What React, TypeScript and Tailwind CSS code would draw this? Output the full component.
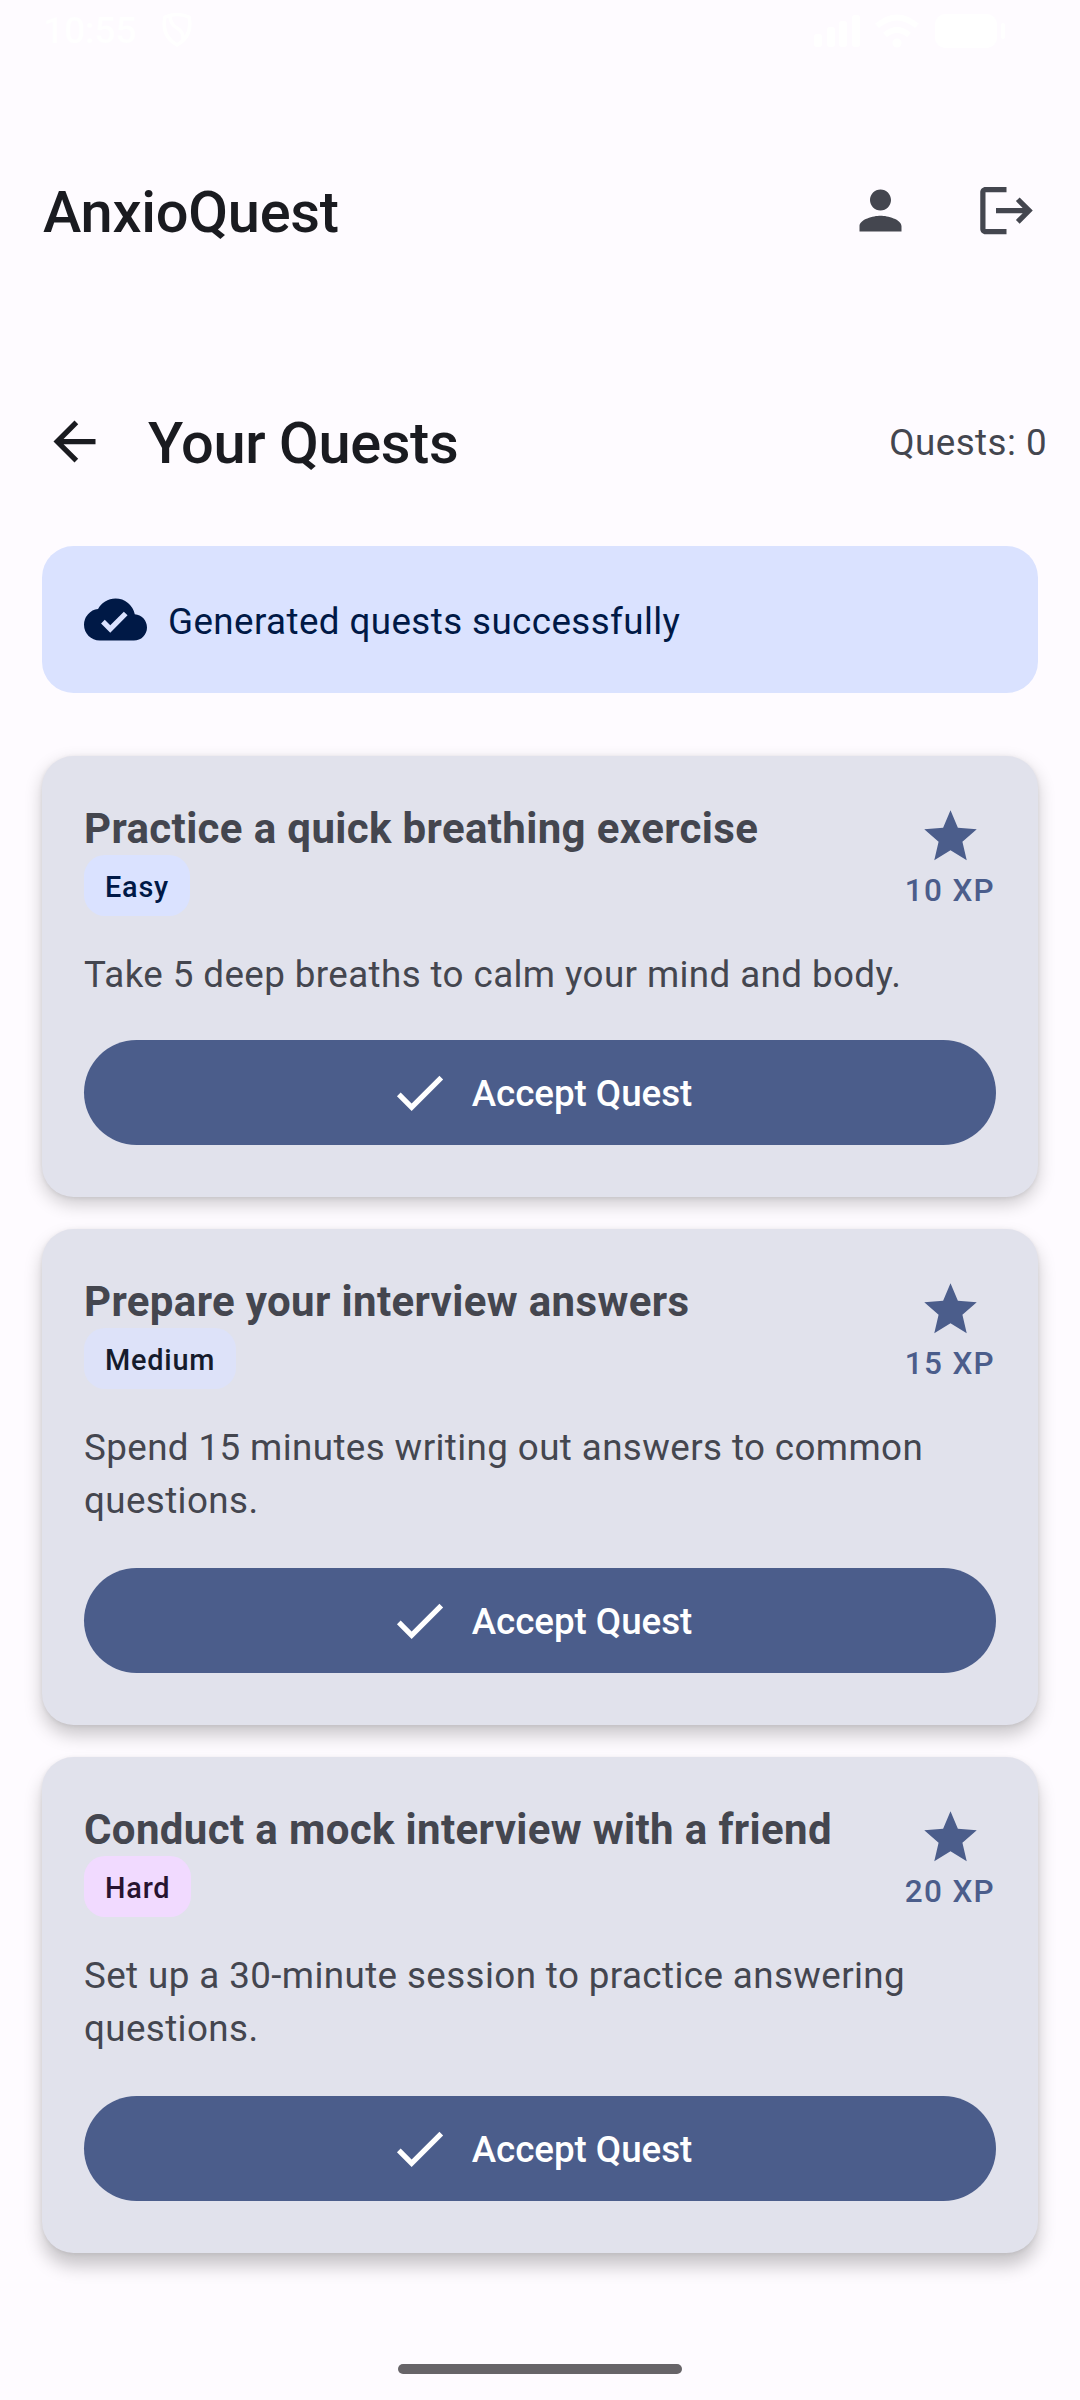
import { clsx } from "clsx";
import { MdArrowBack, MdCheck, MdCloudDone, MdLogout, MdPerson, MdStar } from "react-icons/md";

type Difficulty = "Easy" | "Medium" | "Hard";

interface Quest {
  title: string;
  difficulty: Difficulty;
  xp: number;
  description: string;
}

const quests: Quest[] = [
  {
    title: "Practice a quick breathing exercise",
    difficulty: "Easy",
    xp: 10,
    description: "Take 5 deep breaths to calm your mind and body.",
  },
  {
    title: "Prepare your interview answers",
    difficulty: "Medium",
    xp: 15,
    description: "Spend 15 minutes writing out answers to common questions.",
  },
  {
    title: "Conduct a mock interview with a friend",
    difficulty: "Hard",
    xp: 20,
    description: "Set up a 30-minute session to practice answering questions.",
  },
];

const badgeColors: Record<Difficulty, string> = {
  Easy: "bg-[#dae2ff] text-[#001946]",
  Medium: "bg-[#dde2f9] text-[#151b2c]",
  Hard: "bg-[#f1daff] text-[#271430]",
};

const cardStyles = [
  "h-[441px] shadow-[0_7px_18px_rgba(0,0,0,0.2),0_1px_4px_rgba(0,0,0,0.08)]",
  "h-[496px] shadow-[0_10px_18px_rgba(0,0,0,0.21),0_1px_4px_rgba(0,0,0,0.08)]",
  "h-[496px] shadow-[0_13px_18px_rgba(0,0,0,0.22),0_1px_4px_rgba(0,0,0,0.08)]",
];

function StatusBar() {
  return (
    <div className="flex h-[63px] items-start justify-between pl-[43px] pr-[75px] pt-[9px] text-white">
      <div className="flex items-center gap-[25px]">
        <span className="text-[37.5px] font-medium leading-[42px] tracking-[-0.4px]">10:55</span>
        <svg className="h-[36px] w-[32px]" viewBox="0 0 32 36" fill="none" stroke="currentColor" strokeWidth="3.5">
          <path d="M4 5Q16 0 28 5Q32 24 16 33Q0 24 4 5Z" />
          <path d="M9 4Q9 12 16 16Q23 20 22 28" />
        </svg>
      </div>
      <svg className="mt-[4px] h-[36px] w-[191px]" viewBox="0 0 191 36" fill="currentColor">
        <rect x="0" y="21" width="8" height="13" rx="3" />
        <rect x="13" y="14" width="8" height="20" rx="3" />
        <rect x="25" y="8" width="8" height="26" rx="3" />
        <rect x="38" y="2" width="8" height="32" rx="3" />
        <g fill="none" stroke="currentColor" strokeWidth="6">
          <path d="M63 13Q83 -4 103 13" />
          <path d="M71 22Q83 12 95 22" />
        </g>
        <circle cx="83" cy="30" r="4.5" />
        <rect x="121" y="1" width="62" height="34" rx="10" />
        <rect x="187" y="10" width="4" height="16" rx="2" />
      </svg>
    </div>
  );
}

function QuestCard({ quest, className }: { quest: Quest; className: string }) {
  return (
    <article
      className={clsx("flex flex-col rounded-[31.5px] bg-[#e1e2ec] px-[42px] pb-[52px] pt-[42px] text-[#44464f]", className)}
    >
      <div className="flex items-center justify-between">
        <div className="flex flex-col items-start">
          <h2 className="h-[57px] text-[42px] font-bold leading-[62px] tracking-[0.36px]">{quest.title}</h2>
          <span
            className={clsx(
              "flex h-[61px] items-center rounded-[21px] px-[21px] pt-[4px] text-[28.875px] font-medium tracking-[0.8px]",
              badgeColors[quest.difficulty],
            )}
          >
            {quest.difficulty}
          </span>
        </div>
        <div className="flex flex-col items-center text-[#4b5d8b]">
          <MdStar className="size-[63px]" />
          <span className="-mb-[2px] pr-[1px] pt-[2px] text-[31.5px] font-medium leading-[42px] tracking-[1.31px]">
            {quest.xp} XP
          </span>
        </div>
      </div>
      <p className="mt-[32px] text-[36.75px] leading-[53px] tracking-[0.4px]">{quest.description}</p>
      <button className="mt-auto flex h-[105px] w-full items-center justify-center gap-[21px] rounded-full bg-[#4b5d8b] text-white">
        <MdCheck className="size-[63px]" />
        <span className="pt-[4px] text-[36.75px] font-medium leading-[52.5px] tracking-[-0.05px]">Accept Quest</span>
      </button>
    </article>
  );
}

export default function App() {
  return (
    <div className="flex h-[2400px] w-[1080px] flex-col overflow-hidden bg-[#fefbff] font-[Roboto,sans-serif] text-[#1a1b20]">
      <StatusBar />

      <header className="mt-[63px] flex h-[168px] items-center justify-between pl-[43px] pr-[42px]">
        <h1 className="pt-[5px] text-[57.75px] font-medium leading-[73.5px] tracking-[-0.25px]">AnxioQuest</h1>
        <div className="flex items-center gap-[63px] text-[#44464f]">
          <MdPerson className="size-[63px]" />
          <MdLogout className="size-[63px]" />
        </div>
      </header>

      <div className="mt-[84px] flex h-[126px] items-center pl-[43px] pr-[33px]">
        <MdArrowBack className="size-[63px]" />
        <h2 className="ml-[42px] flex-1 pt-[5px] text-[57.75px] font-medium leading-[73.5px] tracking-[-0.4px]">
          Your Quests
        </h2>
        <span className="pt-[4px] text-[36.75px] leading-[52.5px] tracking-[0.45px] text-[#44464f]">Quests: 0</span>
      </div>

      <div className="mx-[42px] mt-[42px] flex h-[147px] items-center gap-[21px] rounded-[31.5px] bg-[#dae2ff] px-[42px] text-[#001946]">
        <MdCloudDone className="size-[63px]" />
        <span className="pt-[6px] text-[36.75px] leading-[52.5px] tracking-[0.41px]">Generated quests successfully</span>
      </div>

      <main className="mx-[42px] mt-[63px] flex flex-col gap-[32px]">
        {quests.map((quest, i) => (
          <QuestCard key={quest.title} quest={quest} className={cardStyles[i]} />
        ))}
      </main>

      {/* gesture handle */}
      <div className="mx-auto mb-[26px] mt-auto h-[10px] w-[284px] rounded-full bg-[#676468]" />
    </div>
  );
}
